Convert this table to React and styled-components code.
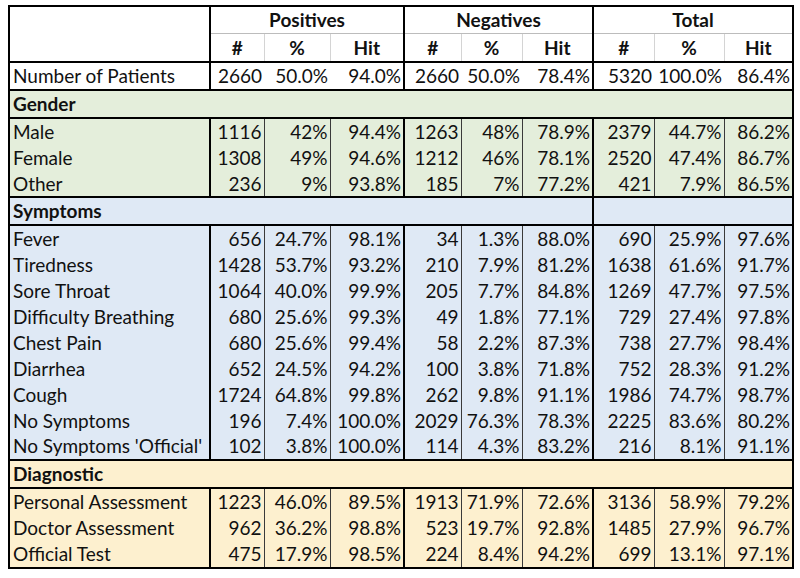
import React from "react";
import styled, { createGlobalStyle } from "styled-components";

const GlobalStyle = createGlobalStyle`
  html, body {
    margin: 0;
    padding: 0;
    background: #ffffff;
  }
`;

const Page = styled.div`
  padding: 5px 8px 0 8px;
  font-family: Lato, "Open Sans", sans-serif;
  color: #111;
`;

const Table = styled.table`
  width: 784px;
  table-layout: fixed;
  border-collapse: collapse;
  border: 2px solid #000;
  font-size: 19px;
  line-height: 22px;
`;

const sectionBg = {
  none: "#ffffff",
  gender: "#e4eedb",
  symptoms: "#dfe9f5",
  diagnostic: "#fdf0cf",
};

const Row = styled.tr`
  background: ${(p) => sectionBg[p.$section || "none"]};
  border-bottom: ${(p) =>
    p.$bottom === "thick" ? "2px solid #000" : p.$bottom === "light" ? "1px solid #c8c8c8" : "none"};
`;

const edge = (kind) =>
  kind === "thick"
    ? "2px solid #000"
    : kind === "thin"
    ? "1px solid #3a3a3a"
    : kind === "light"
    ? "1px solid #d4d4d4"
    : "none";

const HeadCell = styled.th`
  height: ${(p) => p.$h || 26}px;
  padding: 0;
  font-weight: 700;
  text-align: center;
  border-right: ${(p) => edge(p.$right)};
  border-bottom: ${(p) => (p.$underline ? "1px solid #bcbcbc" : "none")};
`;

const Label = styled.td`
  height: 25.9px;
  padding: 0 0 0 3px;
  text-align: left;
  white-space: nowrap;
  font-weight: ${(p) => (p.$bold ? 700 : 400)};
  border-right: ${(p) => edge(p.$right)};
`;

const Num = styled.td`
  height: 25.9px;
  padding: 0 2px 0 0;
  text-align: right;
  white-space: nowrap;
  border-right: ${(p) => edge(p.$right)};
`;

const groupLabels = ["Positives", "Negatives", "Total"];

const sections = [
  {
    key: "gender",
    title: "Gender",
    split: false,
    rows: [
      ["Male", "1116", "42%", "94.4%", "1263", "48%", "78.9%", "2379", "44.7%", "86.2%"],
      ["Female", "1308", "49%", "94.6%", "1212", "46%", "78.1%", "2520", "47.4%", "86.7%"],
      ["Other", "236", "9%", "93.8%", "185", "7%", "77.2%", "421", "7.9%", "86.5%"],
    ],
  },
  {
    key: "symptoms",
    title: "Symptoms",
    split: true,
    rows: [
      ["Fever", "656", "24.7%", "98.1%", "34", "1.3%", "88.0%", "690", "25.9%", "97.6%"],
      ["Tiredness", "1428", "53.7%", "93.2%", "210", "7.9%", "81.2%", "1638", "61.6%", "91.7%"],
      ["Sore Throat", "1064", "40.0%", "99.9%", "205", "7.7%", "84.8%", "1269", "47.7%", "97.5%"],
      ["Difficulty Breathing", "680", "25.6%", "99.3%", "49", "1.8%", "77.1%", "729", "27.4%", "97.8%"],
      ["Chest Pain", "680", "25.6%", "99.4%", "58", "2.2%", "87.3%", "738", "27.7%", "98.4%"],
      ["Diarrhea", "652", "24.5%", "94.2%", "100", "3.8%", "71.8%", "752", "28.3%", "91.2%"],
      ["Cough", "1724", "64.8%", "99.8%", "262", "9.8%", "91.1%", "1986", "74.7%", "98.7%"],
      ["No Symptoms", "196", "7.4%", "100.0%", "2029", "76.3%", "78.3%", "2225", "83.6%", "80.2%"],
      ["No Symptoms 'Official'", "102", "3.8%", "100.0%", "114", "4.3%", "83.2%", "216", "8.1%", "91.1%"],
    ],
  },
  {
    key: "diagnostic",
    title: "Diagnostic",
    split: false,
    rows: [
      ["Personal Assessment", "1223", "46.0%", "89.5%", "1913", "71.9%", "72.6%", "3136", "58.9%", "79.2%"],
      ["Doctor Assessment", "962", "36.2%", "98.8%", "523", "19.7%", "92.8%", "1485", "27.9%", "96.7%"],
      ["Official Test", "475", "17.9%", "98.5%", "224", "8.4%", "94.2%", "699", "13.1%", "97.1%"],
    ],
  },
];

const colWidths = [201, 54, 66, 74, 57, 61, 71, 61, 70, 69];

// last column of each group gets the heavy rule
const rightEdge = (i, inner) => (i % 3 === 0 ? "thick" : inner);

export default function App() {
  return (
    <Page>
      <GlobalStyle />
      <Table>
        <colgroup>
          {colWidths.map((w, i) => (
            <col key={i} style={{ width: w }} />
          ))}
        </colgroup>
        <thead>
          <Row>
            <HeadCell rowSpan={2} $right="thick" />
            {groupLabels.map((g) => (
              <HeadCell key={g} colSpan={3} $right="thick" $underline $h={26}>
                {g}
              </HeadCell>
            ))}
          </Row>
          <Row $bottom="thick">
            {groupLabels.map((g) =>
              ["#", "%", "Hit"].map((c, j) => (
                <HeadCell key={g + c} $right={j === 2 ? "thick" : "light"} $h={27}>
                  {c}
                </HeadCell>
              ))
            )}
          </Row>
        </thead>
        <tbody>
          <Row $bottom="thick">
            <Label $right="thick">Number of Patients</Label>
            {["2660", "50.0%", "94.0%", "2660", "50.0%", "78.4%", "5320", "100.0%", "86.4%"].map((v, i) => (
              <Num key={i} $right={rightEdge(i + 1, "none")}>
                {v}
              </Num>
            ))}
          </Row>
          {sections.map((s) => (
            <React.Fragment key={s.key}>
              <Row $section={s.key} $bottom="thick">
                {s.split ? (
                  <>
                    <Label $bold colSpan={7} $right="thick">
                      {s.title}
                    </Label>
                    <Label colSpan={3} />
                  </>
                ) : (
                  <Label $bold colSpan={10}>
                    {s.title}
                  </Label>
                )}
              </Row>
              {s.rows.map((r, ri) => (
                <Row key={r[0]} $section={s.key} $bottom={ri === s.rows.length - 1 ? "thick" : "none"}>
                  <Label $right="thick">{r[0]}</Label>
                  {r.slice(1).map((v, i) => (
                    <Num key={i} $right={rightEdge(i + 1, "thin")}>
                      {v}
                    </Num>
                  ))}
                </Row>
              ))}
            </React.Fragment>
          ))}
        </tbody>
      </Table>
    </Page>
  );
}
